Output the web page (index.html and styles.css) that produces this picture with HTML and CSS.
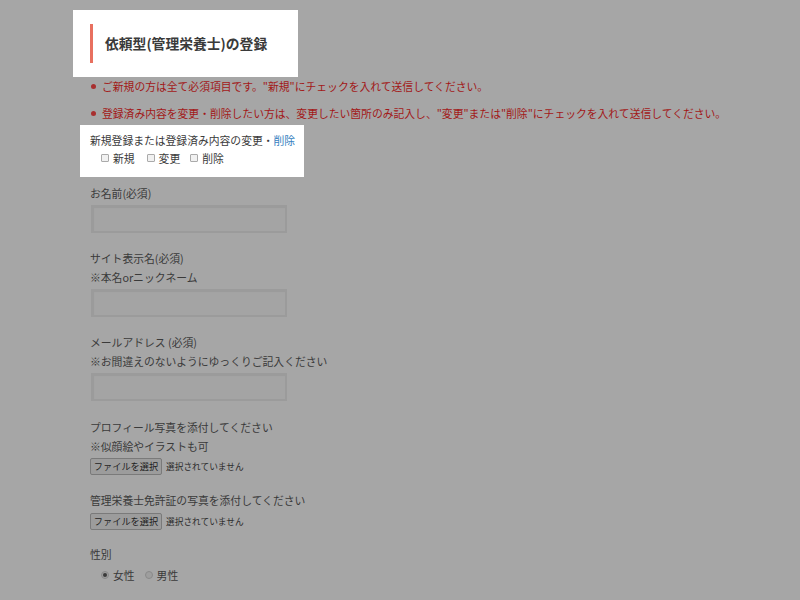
FILE: index.html
```html
<!DOCTYPE html>
<html lang="ja">
<head>
<meta charset="utf-8">
<title>依頼型(管理栄養士)の登録</title>
<link rel="stylesheet" href="styles.css">
</head>
<body>
<main class="page">
  <div class="title-box">
    <h1 class="title">依頼型(管理栄養士)の登録</h1>
  </div>

  <p class="note"><span class="dot"></span>ご新規の方は全て必須項目です。"新規"にチェックを入れて送信してください。</p>
  <p class="note note2"><span class="dot"></span>登録済み内容を変更・削除したい方は、変更したい箇所のみ記入し、"変更"または"削除"にチェックを入れて送信してください。</p>

  <div class="mode-box">
    <div class="mode-title">新規登録または登録済み内容の変更・<span class="blue">削除</span></div>
    <div class="mode-opts">
      <label class="opt"><input type="checkbox" class="cb">新規</label>
      <label class="opt"><input type="checkbox" class="cb">変更</label>
      <label class="opt"><input type="checkbox" class="cb">削除</label>
    </div>
  </div>

  <div class="field first">
    <div class="lbl">お名前(必須)</div>
    <input type="text" class="txt">
  </div>

  <div class="field">
    <div class="lbl">サイト表示名(必須)</div>
    <div class="lbl">※本名orニックネーム</div>
    <input type="text" class="txt">
  </div>

  <div class="field">
    <div class="lbl">メールアドレス (必須)</div>
    <div class="lbl">※お間違えのないようにゆっくりご記入ください</div>
    <input type="text" class="txt">
  </div>

  <div class="field f-photo">
    <div class="lbl">プロフィール写真を添付してください</div>
    <div class="lbl">※似顔絵やイラストも可</div>
    <div class="file"><span class="fbtn">ファイルを選択</span><span class="fname">選択されていません</span></div>
  </div>

  <div class="field">
    <div class="lbl">管理栄養士免許証の写真を添付してください</div>
    <div class="file f2"><span class="fbtn">ファイルを選択</span><span class="fname">選択されていません</span></div>
  </div>

  <div class="field f-sex">
    <div class="lbl">性別</div>
    <div class="radios">
      <label class="opt"><span class="radio on"></span>女性</label>
      <label class="opt"><span class="radio"></span>男性</label>
    </div>
  </div>
</main>
</body>
</html>
```

FILE: styles.css
```css
html, body {
  margin: 0;
  padding: 0;
  background: #a6a6a6;
  height: 100%;
  overflow: hidden;
}
body {
  font-family: "Noto Sans CJK JP", "Noto Sans", sans-serif;
  font-size: 11px;
  color: #3a3a3a;
}
.page {
  padding-left: 90px;
  padding-top: 10px;
}
.title-box {
  margin-left: -17px;
  width: 225px;
  box-sizing: border-box;
  background: #fff;
  padding: 14px 0 14px 17px;
}
.title {
  margin: 0;
  height: 39px;
  border-left: 3px solid #e8705f;
  padding-left: 12px;
  font-size: 13.8px;
  font-weight: bold;
  color: #3a3a3a;
  line-height: 39px;
}
.note {
  margin: 0;
  height: 18px;
  color: #a21818;
  line-height: 18px;
  display: flex;
  align-items: center;
  font-size: 10.8px;
}
.note.note2 {
  margin-top: 9px;
}
.dot {
  width: 5px;
  height: 5px;
  border-radius: 50%;
  background: #a83030;
  margin: 0 6px 0 1px;
  flex: none;
}
.mode-box {
  margin-top: 3px;
  margin-left: -10px;
  width: 224px;
  box-sizing: border-box;
  background: #fff;
  padding: 6px 0 10px 10px;
  color: #3a3a3a;
  font-size: 10.8px;
  line-height: 18px;
}
.blue { color: #3580c0; }
.mode-opts {
  padding-left: 11px;
  display: flex;
  gap: 10px;
}
.opt {
  display: inline-flex;
  align-items: center;
}
.cb {
  appearance: none;
  -webkit-appearance: none;
  width: 8px;
  height: 8px;
  margin: 0 4px 0 0;
  border: 1px solid #aaa;
  border-radius: 1px;
  background: #f1f1f1;
  box-sizing: border-box;
}
.mode-opts .opt:nth-child(2) { margin-left: 2px; }
.field {
  margin-top: 16px;
  line-height: 19px;
  font-size: 10.8px;
}
.field.first { margin-top: 7px; }
.field.f-photo { margin-top: 17px; }
.field.f-sex { margin-top: 15px; }
.txt {
  display: block;
  margin: 2px 0 0 1px;
  width: 196px;
  height: 28px;
  box-sizing: border-box;
  border: 2px solid #9b9b9b;
  background: #a4a4a4;
  box-shadow: inset 1px 1px 1px rgba(0,0,0,0.06);
  outline: none;
}
.file {
  margin-top: 2px;
  display: flex;
  align-items: center;
  height: 17px;
}
.file.f2 { margin-top: 3px; }
.fbtn {
  box-sizing: border-box;
  height: 17px;
  width: 72px;
  border: 1px solid #7a7a7a;
  border-radius: 2px;
  background: #9c9c9c;
  font-size: 9.2px;
  line-height: 15px;
  text-align: center;
  color: #1e1e1e;
}
.fname {
  margin-left: 4px;
  font-size: 8.7px;
  color: #2a2a2a;
}
.radios {
  padding-left: 11px;
  display: flex;
  gap: 10px;
  line-height: 20px;
  margin-top: 1px;
}
.radio {
  width: 8px;
  height: 8px;
  border-radius: 50%;
  border: 1px solid #8a8a8a;
  background: #9e9e9e;
  box-sizing: border-box;
  margin-right: 4px;
  position: relative;
}
.radio.on::after {
  content: "";
  position: absolute;
  left: 1px;
  top: 1px;
  width: 4px;
  height: 4px;
  border-radius: 50%;
  background: #3a3a3a;
}
```
